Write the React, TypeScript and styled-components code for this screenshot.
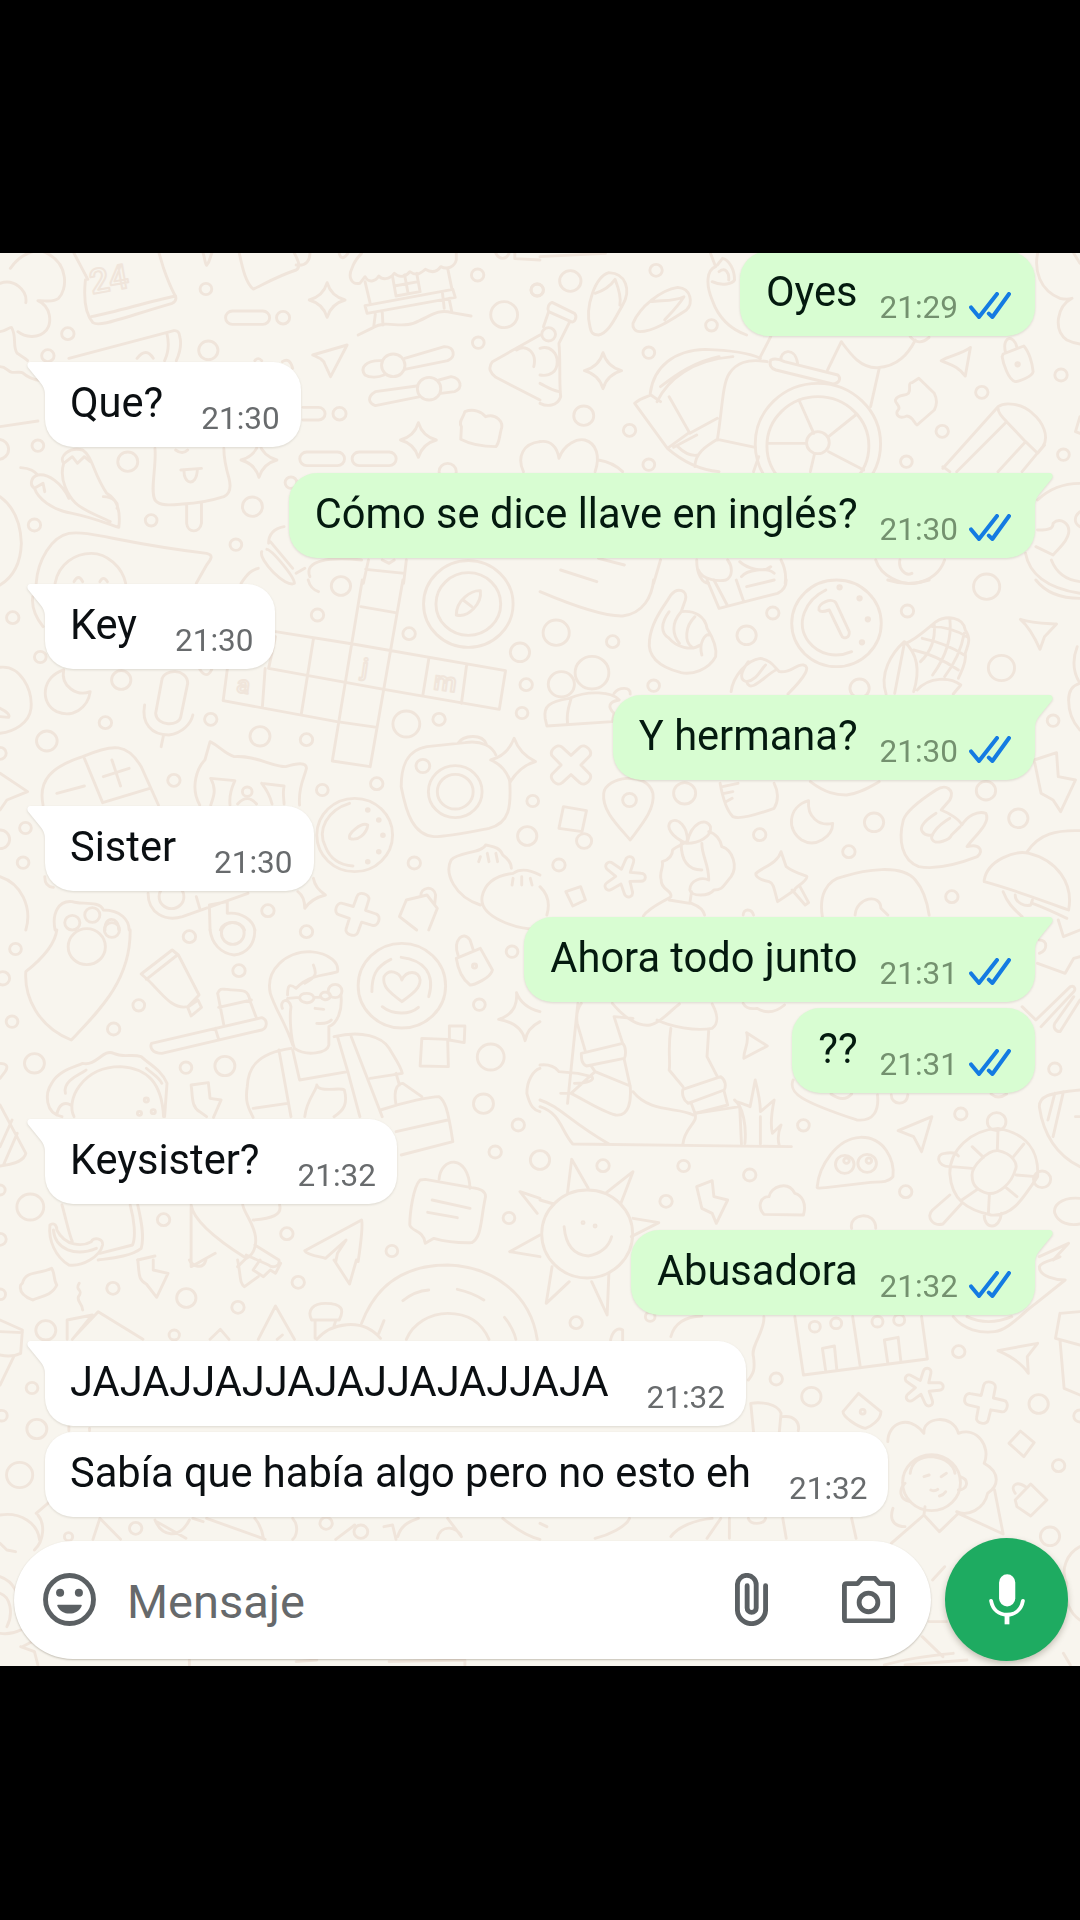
import React from "react";
import styled, { createGlobalStyle, css } from "styled-components";

const GlobalStyle = createGlobalStyle`
  *, *::before, *::after { box-sizing: border-box; }
  body { margin: 0; background: #000; }
`;

const Screen = styled.div`
  display: flex;
  flex-direction: column;
  width: 1080px;
  height: 1920px;
  padding: 253px 0 254px;
  background: #000;
  font-family: Roboto, "Noto Sans", sans-serif;
`;

const Chat = styled.main`
  display: grid;
  grid-template: minmax(0, 1fr) / minmax(0, 1fr);
  flex: 1;
  min-height: 0;
  overflow: hidden;
  background: #f8f5ee;
`;

const WallpaperSvg = styled.svg`
  grid-area: 1 / 1;
  width: 1080px;
  height: 1413px;
  fill: none;
  stroke: #f0e5db;
  stroke-width: 2.9px;
  stroke-linecap: round;
  stroke-linejoin: round;

  path,
  circle {
    vector-effect: non-scaling-stroke;
  }
`;

const WallpaperLetter = styled.text`
  stroke-width: 2px;
  font-weight: 500;
`;

const Column = styled.div`
  grid-area: 1 / 1;
  position: relative;
  display: flex;
  flex-direction: column;
  justify-content: flex-end;
  min-height: 0;
`;

const Messages = styled.div`
  display: flex;
  flex-direction: column;
  padding: 0 45px;
`;

const Bubble = styled.div<{ $mine: boolean; $tail: boolean; $grouped: boolean }>`
  position: relative;
  display: flex;
  align-items: flex-start;
  flex: none;
  height: 85px;
  margin-top: ${(p) => (p.$grouped ? 6 : 26)}px;
  border-radius: 28px;
  white-space: nowrap;
  filter: drop-shadow(0 1.5px 1px rgba(90, 80, 60, 0.17));
  ${(p) =>
    p.$mine
      ? css`
          align-self: flex-end;
          gap: 22px;
          padding: 16px 24px 10px 26px;
          background: #d8fdd2;
          ${p.$tail && "border-top-right-radius: 0;"}
        `
      : css`
          align-self: flex-start;
          gap: 38px;
          padding: 16px 21px 10px 25px;
          background: #fff;
          ${p.$tail && "border-top-left-radius: 0;"}
        `}
`;

const TailSvg = styled.svg<{ $mine: boolean }>`
  position: absolute;
  top: 0;
  width: 19px;
  height: 36px;
  ${(p) =>
    p.$mine
      ? "right: -18px; transform: scaleX(-1); fill: #d8fdd2;"
      : "left: -18px; fill: #fff;"}
`;

const Text = styled.span<{ $mine: boolean }>`
  font-size: 41.6px;
  line-height: 49px;
  color: ${(p) => (p.$mine ? "#041a0f" : "#0b0f12")};
`;

const Meta = styled.span<{ $mine: boolean }>`
  display: flex;
  align-items: flex-end;
  align-self: flex-end;
  gap: 11px;
  font-size: 31.5px;
  line-height: 37px;
  color: ${(p) => (p.$mine ? "#74916f" : "#686b6d")};
`;

const TicksSvg = styled.svg`
  width: 42px;
  height: 27px;
  margin-bottom: 7px;
  fill: none;
  stroke: #147be2;
  stroke-width: 4px;
  stroke-linecap: round;
  stroke-linejoin: round;
`;

const Composer = styled.footer`
  display: flex;
  align-items: center;
  flex: none;
  gap: 14px;
  margin-top: 21px;
  padding: 0 12px 5px 14px;
`;

const InputPill = styled.div`
  display: flex;
  align-items: center;
  flex: 1;
  height: 118px;
  padding: 0 36px 0 29px;
  border-radius: 59px;
  background: #fff;
  color: #5b6063;
  box-shadow: 0 1px 2px rgba(80, 70, 50, 0.3);
`;

const Placeholder = styled.span`
  flex: 1;
  margin-left: 31px;
  padding-top: 5px;
  font-size: 47px;
  line-height: 56px;
  color: #66696b;
`;

const Icon = styled.svg<{ $w: number; $h: number; $gap?: number }>`
  flex: none;
  width: ${(p) => p.$w}px;
  height: ${(p) => p.$h}px;
  margin-right: ${(p) => p.$gap ?? 0}px;
  fill: none;
  stroke: currentColor;
  stroke-width: 14.5px;
  stroke-linecap: round;
  stroke-linejoin: round;
`;

const MicArc = styled.path`
  stroke-width: 11.5px;
`;

const MicButton = styled.button`
  display: flex;
  align-items: center;
  justify-content: center;
  flex: none;
  width: 123px;
  height: 123px;
  padding: 0;
  border: 0;
  border-radius: 50%;
  background: #1eab61;
  color: #fff;
  box-shadow: 0 3px 6px rgba(60, 50, 30, 0.28);
`;

/* ---------- wallpaper ---------- */

type Tile = { x: number; y: number; dots: number[][]; art: string[] };

const star = (cx: number, cy: number, r: number) => {
  const k = r * 0.22;
  return `M${cx} ${cy - r}Q${cx + k} ${cy - k} ${cx + r} ${cy}Q${cx + k} ${cy + k} ${cx} ${cy + r}Q${cx - k} ${cy + k} ${cx - r} ${cy}Q${cx - k} ${cy - k} ${cx} ${cy - r}Z`;
};

/* Closed outline with rounded arms: four for a plus, five for an asterisk. */
const arms = (cx: number, cy: number, r: number, count: number, turn: number) => {
  const w = count === 4 ? 0.27 : 0.19;
  const inner = count === 4 ? 0.4 : 0.36;
  const parts: string[] = [];
  for (let i = 0; i < count; i++) {
    const a = ((turn + (360 / count) * i) * Math.PI) / 180;
    const n = a + Math.PI / count;
    const at = (along: number, across: number) =>
      `${(cx + Math.cos(a) * along * r - Math.sin(a) * across * r).toFixed(1)} ${(cy + Math.sin(a) * along * r + Math.cos(a) * across * r).toFixed(1)}`;
    parts.push(
      `${i ? "L" : "M"}${at(0.78, -w)}C${at(1.05, -w)} ${at(1.05, w)} ${at(0.78, w)}`
    );
    parts.push(`L${(cx + Math.cos(n) * inner * r).toFixed(1)} ${(cy + Math.sin(n) * inner * r).toFixed(1)}`);
  }
  return parts.join("") + "Z";
};

const tiles: Tile[] = [
  {
    x: 0,
    y: 240,
    dots: [
      [598, 147, 17], [822, 233, 19], [197, 281, 18], [139, 347, 18], [605, 331, 28], [1387, 105, 18],
      [1464, 224, 39], [1389, 308, 17], [986, 521, 19], [371, 665, 29], [110, 617, 17], [733, 800, 29],
      [439, 841, 17], [100, 855, 18], [685, 914, 17], [-5, 628, 30], [1142, 376, 34], [1246, 446, 34],
      [845, 728, 17], [1300, 695, 25], [1560, 150, 18],
    ],
    art: [
      "M30 85C60 40 110 20 140 42C200 75 195 150 170 175C150 190 130 180 110 182C150 200 150 250 135 270C110 300 70 290 52 275M0 130C40 115 80 150 75 188",
      "M0 275C15 275 25 262 33 262C50 290 35 320 50 340C65 350 75 355 80 362M0 380C20 380 20 395 35 397C50 398 60 395 65 398C80 412 100 420 120 422",
      "M215 40L255 118M248 120C242 180 250 225 270 248C290 262 350 235 500 190C515 182 512 170 505 160C490 130 480 100 475 85L462 40M265 230C340 215 430 185 510 168",
      "M675 213H763A20 20 0 0 1 763 253H675A20 20 0 0 1 675 213ZM891 636H980A20 20 0 0 1 980 677H891A20 20 0 0 1 891 636ZM1043 636H1130A20 20 0 0 1 1130 677H1043A20 20 0 0 1 1043 636ZM880 502H925A19 19 0 0 1 925 540H880",
      star(950, 180, 52), star(1215, 600, 52), star(752, 660, 52),
      "M1008 315L908 345C930 355 940 360 943 372L960 410Z",
      "M590 40C595 55 595 70 600 76C610 65 610 50 615 40M985 40C990 60 1000 55 1010 40M1440 40C1450 60 1470 60 1478 40M1495 40V56L1568 60",
      "M200 355L505 272Q520 270 522 290Q530 320 512 362M485 282Q495 325 478 362M398 355Q425 320 445 355M740 362Q750 350 760 362M820 365Q840 350 850 385",
      "M1108 362C1060 360 1045 385 1060 405C1075 415 1100 412 1115 405M1175 355L1290 320C1320 320 1325 350 1300 362L1175 388M1210 438L1090 455C1065 470 1070 490 1090 497L1220 470M1275 420L1310 410C1340 415 1345 445 1320 455L1280 460",
      "M1022 85C1010 110 1020 135 1045 130L1060 110C1070 130 1090 125 1100 108C1110 120 1130 120 1145 100C1160 115 1180 110 1190 95C1210 110 1220 100 1235 88C1255 100 1270 95 1280 80C1300 90 1320 80 1325 60V40M1022 85C1030 60 1040 50 1050 40",
      "M1060 125L1075 190M1060 197L1315 148L1322 172L1066 220ZM1090 222L1085 262M1110 215L1112 255M1285 160L1290 205M1300 85L1312 145M1304 175L1312 215M1040 285L1085 262C1120 240 1160 265 1200 250C1250 230 1270 205 1312 218L1368 228M1140 110L1150 168L1220 155L1210 100M1145 138L1215 125M1175 105L1185 160",
      "M695 40C705 90 715 130 735 147C745 145 800 110 860 90C875 80 865 60 855 40M860 75C890 80 900 60 900 40",
      "M1340 560C1330 545 1345 535 1350 515C1375 505 1400 515 1410 530C1440 520 1465 545 1455 570C1450 590 1450 610 1440 620C1400 620 1360 610 1338 598Z",
      "M450 625C455 680 435 750 450 780C465 800 500 795 530 792C570 790 620 780 650 770C670 760 670 735 665 715C655 680 650 650 650 625M542 795V850C545 880 580 880 585 850V790M525 690L585 685M535 690C530 730 570 745 573 690M510 630Q530 645 545 630",
      "M60 683C90 685 100 695 110 705C90 710 85 735 100 745C110 775 150 810 210 820C260 830 310 850 345 862C350 820 345 780 310 760C270 700 270 650 240 630C200 620 170 650 185 670M185 670C170 720 200 770 220 790C240 810 280 825 320 845M110 705C140 700 180 730 200 775M300 770C330 770 345 790 340 805M185 670L210 650L225 670L245 650L262 665M100 745L125 730L130 755",
      "M105 1030C110 960 150 890 200 880C260 870 350 910 600 940C620 945 615 955 600 975L570 1030M160 1030C170 970 220 940 265 940C310 940 355 980 365 1030M215 1025Q228 1000 240 1025M290 1025Q300 1005 312 1025",
      "M0 770C40 800 60 850 62 910C60 970 40 1010 0 1035M0 560L110 543",
      "M780 910C780 880 800 865 825 860M785 905L850 985M760 935C750 960 830 1045 855 1030C855 1010 790 930 775 928M700 1030C720 1000 730 990 750 985M860 1000L885 985",
      "M900 1010C880 960 960 950 1050 960M1070 960L1055 1030M1180 960L1172 1030M1062 988L1175 1000M1110 960L1130 970L1145 960",
      "M1568 285L1430 365C1415 385 1425 400 1440 412L1568 480M1500 330C1530 310 1560 340 1550 380M1568 605C1520 610 1500 650 1520 695",
    ],
  },
  {
    x: 540,
    y: 240,
    dots: [
      [88, 123, 31], [337, 91, 18], [498, 256, 17], [316, 338, 17], [127, 527, 29], [260, 571, 18],
      [316, 674, 17], [807, 608, 33], [807, 618, 148], [807, 612, 182], [1283, 457, 18], [1168, 574, 18],
      [1064, 665, 17], [1513, 405, 18], [1520, 644, 17], [25, 283, 20], [1387, 373, 5], [-8, 150, 18],
    ],
    art: [
      "M0 50L190 40",
      "M145 260C130 200 160 110 200 98C250 100 265 150 240 195C220 230 200 280 170 285C150 285 148 275 145 260ZM160 160C190 150 210 130 218 118C230 150 235 180 232 195",
      "M270 250C290 200 350 150 400 142C440 145 445 190 425 210C380 240 330 275 290 275C275 275 268 262 270 250ZM320 185C350 180 390 185 418 170C400 200 370 230 362 240",
      "M35 187L100 220C110 230 100 250 90 245L25 215C20 205 25 190 35 187ZM25 215L10 260M85 248L55 310C60 360 55 420 60 470C50 500 20 500 0 490M0 325C30 315 50 340 50 365C50 395 30 410 0 405M0 430C20 440 30 450 55 455",
      "M495 40L510 80C485 90 480 130 500 180C520 240 560 270 600 285M500 125C530 140 560 130 565 120C565 90 550 60 530 55L515 75M520 95C540 80 550 100 548 120",
      "M320 460C330 380 390 330 480 328C540 330 600 335 640 355M340 485C370 420 440 360 560 350M350 440C400 400 450 365 520 350M640 350L670 290M275 490C290 475 310 470 322 465L350 485M375 470L435 580L515 535M275 490L370 625L430 580M515 600C530 500 530 430 550 400C570 370 600 355 660 365M515 598L625 622M370 625C420 670 470 690 520 695M400 620C420 640 440 650 460 645M450 680C450 640 480 620 515 598M388 622L455 585M635 650L620 695",
      "M670 360C665 375 670 385 685 390L850 432C870 430 875 415 865 405L710 365C690 355 680 355 670 360ZM700 360C695 335 740 315 748 370M835 390L875 305C900 340 930 385 980 383C1040 380 1070 340 1090 300M985 385L960 500M1075 290Q1100 320 1130 292",
      "M752 480L795 580M838 590L920 522M838 635L940 690M770 610H662M797 642L785 695",
      star(183, 392, 54),
      "M0 605C30 600 50 620 55 655C70 610 110 595 130 600C165 610 175 650 160 695M170 660C200 665 220 675 240 695",
      "M1100 415L1145 460C1155 480 1150 500 1145 510L1095 555C1085 550 1085 530 1065 528C1040 540 1030 520 1040 510C1050 500 1030 490 1032 480C1040 460 1060 470 1070 460C1080 445 1065 430 1080 428Z",
      "M1250 322C1220 345 1190 345 1165 362C1190 375 1210 375 1235 408Z",
      "M1345 342L1405 318C1420 335 1430 370 1432 395C1430 410 1390 425 1380 425C1360 420 1345 370 1342 350ZM1352 338C1340 290 1375 280 1385 322",
      "M1170 685L1330 500C1350 485 1400 490 1430 520C1460 545 1480 590 1460 620L1400 695M1330 505C1330 520 1350 540 1355 545L1410 605L1445 640L1465 615M1355 545L1210 695M1410 605L1330 695M1170 680L1190 695",
      "M1445 40C1435 90 1450 150 1510 175C1530 180 1545 175 1545 175C1500 200 1490 270 1530 300C1550 310 1568 312 1568 312M1568 530L1555 575L1568 580M1550 40L1568 70",
      "M1445 780C1480 745 1520 730 1568 730M1445 870C1490 870 1490 860 1490 850C1510 830 1540 850 1535 880C1530 910 1500 930 1490 945L1440 920M1410 940C1420 1000 1470 1045 1568 1060M1485 960C1500 1000 1530 1020 1568 1025M1568 815C1550 830 1550 850 1568 860",
      "M455 960C455 1000 470 1030 490 1030M545 960C560 980 560 1010 540 1020C520 1025 470 1020 460 990M580 965C600 985 650 1000 670 980M700 960C715 990 715 1010 712 1030M585 1010C600 990 660 980 680 1000M350 960L330 1030M60 990L165 1025M170 955L245 975M975 960C990 1010 1050 1035 1090 1030C1140 1020 1165 990 1175 960M1045 960C1040 985 1060 1010 1080 1000",
    ],
  },
  {
    x: 0,
    y: 580,
    dots: [
      [37, 113, 18], [117, 231, 17], [352, 300, 28], [306, 428, 18], [136, 483, 30], [612, 418, 18],
      [755, 469, 29], [890, 479, 18], [505, 601, 18], [936, 630, 17], [1094, 611, 18], [1180, 432, 39],
      [1275, 418, 18], [1510, 217, 28], [1528, 314, 18], [1516, 399, 17], [1188, 161, 18], [922, 105, 18],
      [990, 18, 28], [1547, 663, 17], [1531, 768, 28], [1203, 849, 18], [778, 992, 18], [67, 848, 17],
      [74, 744, 17], [0, 778, 28], [1360, 72, 130], [1360, 72, 94], [1322, 635, 52], [1322, 635, 78],
      [1228, 558, 20], [1030, 765, 110], [0, 520, 18], [210, 1028, 22], [268, 1005, 22], [498, 950, 36],
      [718, 635, 14], [1068, 690, 4], [1100, 720, 4], [1112, 766, 4], [1100, 815, 4], [1068, 845, 4],
    ],
    art: [
      "M1325 105C1325 60 1370 30 1395 32C1400 70 1360 115 1325 105ZM1345 60L1370 80",
      "M800 155L1025 192L1468 272L1450 388L1115 328M780 265L1115 328M660 268L648 362L978 425L1095 442M1052 0L965 543L1075 560L1170 0M770 265L762 380M910 178L875 402M1245 238L1228 345M1355 255L1340 370M1048 80L1148 98M800 170L780 265",
      "M185 270C120 290 115 370 165 395C210 415 255 385 262 335C225 350 175 320 185 270Z",
      "M470 300C475 265 545 265 545 310L525 410C520 440 455 440 452 400ZM420 375C410 430 440 465 490 465C530 460 555 430 560 405M475 465L468 500M580 268Q600 300 615 268",
      "M125 675C110 600 150 560 240 530C330 490 370 490 410 560L460 675M245 535L298 668M165 640L245 618M298 668L435 625M300 590L375 565M325 540L350 618",
      "M580 675C550 620 575 560 595 540L610 485C640 500 650 520 680 530C740 525 790 560 830 560C860 550 890 545 890 565C885 590 865 620 870 675M612 675C620 650 630 630 612 595L682 602C672 625 665 650 668 675M760 610L825 618C820 640 825 660 825 672M760 610C775 630 785 650 790 672M690 672Q718 640 745 672",
      "M1440 525C1430 500 1400 480 1350 488L1240 500C1180 510 1165 560 1165 620C1180 700 1200 765 1260 770C1300 770 1370 755 1420 745C1480 730 1485 680 1480 600M1330 490C1345 465 1400 460 1412 492",
      "M1493 475C1505 510 1525 530 1555 545C1520 555 1500 575 1482 605C1470 570 1450 550 1425 540C1460 530 1480 510 1493 475Z",
      "M1015 670C950 690 920 750 945 800C960 840 990 855 1025 858M1015 775C1010 760 1050 725 1068 735C1065 760 1040 785 1015 775Z",
      "M0 262C60 255 95 330 90 385C85 430 40 455 0 460M0 385C20 395 30 405 25 412L0 410M0 580L80 635L20 660L0 690M0 890C60 910 95 980 75 1050",
      "M1395 975C1320 950 1290 880 1310 840C1330 815 1400 820 1410 795C1430 800 1450 800 1460 825C1480 840 1485 855 1485 865M1568 1048C1500 1050 1390 1010 1400 950C1410 900 1450 885 1490 880C1510 865 1540 870 1568 885M1395 830L1390 845M1415 820L1420 845M1440 820L1445 845M1490 895L1487 915M1515 890V915M1540 895L1545 915",
      "M1180 960L1240 945L1270 985L1245 1050M1180 960L1160 1010L1210 1050M1222 950C1220 920 1260 915 1265 945L1262 975",
      arms(1038, 1003, 66, 4, 18),
      "M160 1050C150 1000 170 960 210 965C230 975 290 960 300 990C350 990 375 1020 375 1050M305 1050C300 1010 345 1005 345 1050M430 940C430 1000 480 1025 530 1010L720 940M580 985L570 950M610 1050L608 975L660 965V1000C700 995 735 1020 740 1050M640 1050C650 1020 700 1020 710 1050",
      "M865 935Q885 950 885 985Q905 955 945 945Q915 925 910 895M95 50C90 90 110 120 125 140M130 890Q130 920 155 922M895 0C900 20 910 30 925 35",
    ],
  },
  {
    x: 540,
    y: 580,
    dots: [
      [47, 158, 38], [151, 278, 49], [62, 313, 38], [211, 185, 18], [600, 166, 28], [676, 99, 18],
      [330, 317, 17], [861, 130, 130], [1067, 93, 18], [1340, 264, 38], [1297, 20, 38], [928, 325, 28],
      [1490, 422, 17], [420, 640, 32], [260, 660, 20], [638, 764, 18], [970, 727, 28], [897, 815, 18],
      [1389, 715, 28], [1295, 632, 28], [1196, 950, 18], [55, 855, 18], [128, 783, 22], [870, 22, 5],
      [928, 55, 5], [952, 118, 5], [935, 187, 5],
    ],
    art: [
      "M0 35C80 70 180 110 240 108C300 100 325 50 330 0",
      "M318 180C325 120 360 80 380 45C400 20 430 30 422 60L410 95C450 90 480 110 485 145C500 170 515 200 510 230C490 270 440 285 410 278C360 265 310 240 318 180ZM375 95C350 130 350 160 375 175M410 95C380 130 385 165 405 190M450 110C420 140 420 185 440 200M470 225C460 190 480 160 490 165M375 175C395 200 440 215 465 195",
      "M485 0L520 85L690 40C710 30 715 15 715 0M505 0L545 78M570 0L590 60M600 20L680 0",
      "M830 30C770 60 740 130 780 185C810 225 860 235 905 215M810 90C805 70 850 50 860 70L898 155C900 175 880 180 875 165L840 90C825 95 815 98 810 90Z",
      "M1005 342C985 280 1020 220 1058 185C1095 220 1105 270 1085 335M1058 190L1030 340M1095 330C1130 290 1190 290 1222 315L1200 342M1062 190C1090 180 1120 150 1150 125C1180 105 1230 110 1235 150C1255 180 1240 200 1235 220C1240 250 1220 280 1215 295M1085 210Q1150 225 1215 270M1110 175Q1180 190 1232 225M1140 140Q1190 140 1240 170M1145 135Q1150 200 1105 245M1190 115Q1200 200 1140 285M1232 160Q1220 230 1175 290",
      "M1395 118C1430 130 1470 130 1500 132L1465 170L1452 208C1440 180 1420 140 1395 118Z",
      "M555 335C560 290 600 240 640 235C670 240 680 260 695 275C730 280 745 250 765 255C785 260 775 285 720 342M605 245C580 280 580 300 600 305C630 300 640 270 655 255M600 305C610 345 660 280 685 270",
      "M15 415C10 380 25 365 85 355C140 330 210 335 230 360C200 365 195 380 215 400L210 425L20 438ZM80 430C75 390 90 365 90 355M215 340C230 320 265 320 262 342",
      arms(90, 555, 72, 4, 45),
      arms(243, 890, 64, 5, -70),
      "M68 680L135 692L122 755L55 745ZM75 935L118 920L132 960L95 978Z",
      "M262 780C220 730 180 690 185 640C190 590 310 570 328 640C335 690 290 740 262 780Z",
      "M523 610C530 650 540 690 560 710C580 720 640 700 680 685C695 660 690 630 680 610M530 620L575 610M535 640L560 635M540 665L558 655M785 605C830 640 860 645 890 645C930 640 960 620 985 605",
      "M780 662C720 680 715 750 760 780C800 805 850 770 850 730C810 740 775 710 780 662Z",
      "M1055 720C1065 690 1120 650 1150 630C1180 610 1205 630 1190 660L1165 690C1190 700 1220 720 1225 735C1240 710 1270 690 1295 700C1310 730 1260 770 1240 800C1275 790 1290 810 1270 830C1220 850 1150 870 1100 860C1050 840 1040 780 1055 720ZM1150 700C1120 720 1100 740 1110 755C1120 770 1140 765 1140 765M1190 715C1150 740 1130 770 1140 780C1150 795 1190 780 1195 765L1220 740",
      "M1435 540L1500 518L1505 590L1555 600L1512 695L1490 660L1455 640Z",
      "M1535 360C1535 400 1550 430 1568 450M1560 200C1545 240 1550 280 1568 310M1535 360C1535 330 1550 315 1568 310M1440 0C1470 40 1520 55 1568 55M1010 0Q1070 20 1130 0",
      "M1290 900C1300 840 1380 810 1420 820C1500 840 1550 910 1535 990C1480 970 1380 930 1290 905ZM1415 815C1450 760 1500 750 1568 752M1345 935C1360 975 1380 990 1400 1010M1380 945C1380 970 1410 980 1425 975L1430 960M1430 970C1470 985 1510 1005 1530 1015",
      "M300 1008C320 980 360 965 380 950C385 930 350 930 352 900C345 880 360 860 355 845C370 840 385 830 385 810C395 800 420 790 425 785M425 790C380 770 365 740 380 725C400 710 430 740 428 785C440 730 480 710 495 740C500 770 460 790 428 790M490 755C510 760 525 780 528 800C560 810 575 860 555 890C530 920 530 930 505 930C490 950 440 950 435 930C435 900 470 890 490 900M410 790C410 830 420 870 470 870M470 790C470 830 490 850 490 900M375 960L435 970L440 935M440 970C465 980 475 990 478 1005",
      "M700 815L715 860C740 880 770 885 775 890C775 905 735 925 740 930L690 965C680 930 680 910 665 905C640 900 625 890 627 880C650 860 690 850 700 815ZM732 930L770 975L780 968L755 920",
      "M820 1010C810 950 830 900 880 890C940 870 1050 850 1090 900C1115 930 1125 970 1130 1005M915 1005C920 950 990 940 990 985L1010 1005M0 920C20 940 30 970 20 1005M590 1005C590 985 615 985 620 1005",
    ],
  },
  {
    x: 0,
    y: 920,
    dots: [
      [45, 87, 17], [252, 80, 54], [325, 30, 22], [676, 40, 33], [550, 50, 18], [694, 152, 18],
      [890, 35, 18], [403, 256, 17], [35, 305, 17], [330, 327, 18], [100, 430, 29], [540, 443, 17],
      [653, 438, 29], [1167, 197, 127], [1487, 95, 17], [1392, 254, 17], [1425, 411, 39], [1404, 551, 29],
      [1505, 615, 18], [1438, 696, 18], [1478, 894, 17], [88, 861, 39], [475, 899, 18], [833, 941, 18],
      [1138, 993, 17], [8, 175, 20], [0, 810, 15], [0, 958, 18], [1378, 138, 6], [425, 540, 6],
      [445, 575, 6], [405, 580, 6], [973, 213, 20],
    ],
    art: [
      "M165 30C160 70 130 110 75 155C70 230 110 320 207 360C290 270 380 180 378 30",
      "M410 162L500 90L518 105L578 225L545 260C500 270 470 220 430 180ZM425 178L515 105M545 262L575 240L585 262L555 288Z",
      "M610 30C615 70 640 100 680 105C720 100 740 70 740 30",
      "M440 370L760 293C780 300 775 325 760 330L470 400C440 400 435 380 440 370ZM625 325L635 358M632 220C640 200 650 210 660 208C690 215 720 200 725 240L745 295M635 262L730 240M632 220L650 315",
      "M785 220C770 150 830 95 900 95C960 100 985 130 980 155C960 165 900 160 860 205C840 190 835 195 835 225M910 135C920 160 920 170 885 190M785 220C800 270 830 310 850 375M820 265C810 240 840 230 845 260C840 290 845 360 855 385C890 410 950 400 955 375V320C980 310 995 270 990 225M920 310C940 312 955 308 962 300M870 235C870 215 910 215 912 235C905 255 875 250 870 235ZM930 228C935 210 960 215 960 230C950 245 935 240 930 228ZM912 232H930M835 235L870 232M915 265L940 268",
      "M845 385C740 400 720 450 718 500C710 550 725 570 735 592M810 390L845 590M850 390L870 480L1010 455L980 350M970 350C1050 330 1110 350 1130 385C1150 420 1165 440 1168 460L1075 475M1020 350L1110 590M735 565L835 550M1010 455L1045 590M885 590C890 540 920 510 920 495C925 520 990 500 1000 510C1010 550 1000 570 970 590",
      "M1105 570C1180 545 1250 530 1275 530C1290 540 1300 560 1315 665L1165 705M1150 635L1300 600M1150 555C1140 500 1160 490 1170 490L1225 530M1150 460L1160 495",
      "M1167 245C1130 215 1110 200 1115 170C1130 145 1160 155 1167 180C1180 150 1215 150 1220 180C1220 205 1200 220 1167 245ZM1080 215C1080 170 1090 140 1135 118M1165 112C1230 120 1265 160 1245 230M1110 260C1140 285 1190 285 1215 262",
      "M1325 115L1395 85L1430 150C1425 175 1375 195 1365 195C1345 180 1330 150 1325 115ZM1330 105C1315 60 1345 30 1365 60L1375 92",
      "M1500 218Q1515 260 1568 275M1500 218Q1505 280 1448 298Q1515 310 1525 362Q1530 325 1568 305",
      "M1225 355L1300 358L1302 440L1220 438ZM1305 318H1350L1348 368L1305 360Z",
      "M180 590C130 580 130 520 150 490C170 450 220 440 240 430C280 440 300 385 330 400C360 415 380 400 410 410C430 430 470 450 485 490L478 590M215 590C190 540 240 440 350 440C430 445 470 490 475 590M165 585C170 550 190 545 205 555M190 520C180 480 240 460 250 450M425 445C440 460 460 470 470 490",
      "M555 495L605 488L610 535L642 540L620 592M555 495C560 530 555 560 580 575L600 590",
      "M0 430C20 430 25 440 15 455L0 475M0 555L75 700C70 725 30 735 0 738M0 680L35 600M10 735L50 640",
      "M180 855C190 890 200 940 210 965M378 855C390 900 395 950 385 975L290 1000M400 855C410 900 420 950 410 985C380 1010 320 1015 285 1020M145 915C160 905 165 920 165 930C190 980 240 980 265 965C270 950 300 955 298 975C290 1010 240 1040 200 1035C160 1010 140 960 145 915ZM155 930C160 990 220 1010 280 985",
      "M555 855C560 890 600 940 715 1015C745 1000 745 960 740 940C730 900 710 880 705 855M555 860V1040L625 1000M715 1015L690 1040M740 975L810 1020C815 1040 790 1045 780 1035L715 1005M735 900C790 895 820 885 812 855",
      "M885 992L1050 900C1055 920 1045 990 1040 1025M885 992C890 1005 930 1010 945 1015L1005 960L980 1000L975 1025",
      "M1220 780C1200 800 1190 880 1190 915C1195 935 1230 930 1235 970L1260 955C1310 970 1350 968 1370 968C1400 950 1395 900 1410 830C1410 810 1390 805 1370 803L1235 778ZM1275 778C1280 710 1360 700 1365 805M1255 840L1365 865M1242 877L1328 893",
      "M1530 520C1530 480 1550 450 1568 445M1530 520C1540 560 1550 570 1568 575M1510 815L1568 835M1510 815L1560 880M1480 995L1568 945M1480 995L1568 1010M400 1020L450 1008",
    ],
  },
  {
    x: 540,
    y: 920,
    dots: [
      [765, 616, 17], [1222, 582, 18], [885, 733, 27], [950, 730, 27], [183, 737, 18], [417, 738, 17],
      [609, 765, 18], [366, 844, 18], [1062, 815, 18], [1495, 447, 18], [1326, 605, 27], [1458, 778, 25],
      [0, 720, 28], [160, 918, 3], [125, 908, 3], [137, 942, 132], [890, 722, 8], [955, 722, 8],
    ],
    art: [
      "M110 250L80 550M120 250C105 270 105 290 108 310L132 395M120 400L240 370C250 380 250 405 245 415L135 438C120 430 120 415 120 400ZM240 370L215 290L270 295M210 250C250 300 290 320 320 315C350 310 380 270 405 252M340 300C380 320 450 335 500 325C520 310 515 280 500 252M380 325C370 390 380 430 375 450L415 500M490 330L485 410L515 470M415 508L525 470C540 480 540 500 535 510L430 550C415 540 412 520 415 508ZM440 552L450 580L545 555L535 515",
      "M150 440L160 455L90 520C130 540 180 575 220 585C260 590 265 540 262 500L245 420M160 455L262 498M445 585C400 560 320 580 270 515M585 672L580 560L450 580C460 610 420 620 415 672M0 435C40 430 50 450 55 455L110 460L150 470C160 480 140 490 100 490M60 520H85M0 540C60 560 80 600 200 672M0 560C60 580 60 630 95 672L730 680M565 540C590 560 600 620 595 670M570 545C600 555 610 560 610 560L625 480C635 520 640 560 640 575L680 540C670 590 670 620 675 640L700 615C690 640 690 660 695 678M640 590V672",
      "M600 338L660 378L592 415C590 390 610 370 600 338Z",
      "M735 480C720 520 760 545 920 600C970 605 985 570 980 525M1020 525C1020 555 1065 560 1068 525M845 522C870 540 890 540 905 522M1310 522Q1330 540 1355 522M590 250Q600 270 630 265Q670 290 710 255",
      "M1138 590L1040 632L1085 650L1108 695Z",
      "M805 800C810 740 860 655 930 652C1000 650 1030 720 1025 770C1010 790 980 785 960 787L830 803C810 805 803 805 805 800Z",
      "M1190 760C1190 690 1250 630 1330 625C1410 640 1450 690 1445 770C1400 840 1370 890 1310 885C1240 870 1195 840 1190 760ZM1255 770C1250 740 1300 690 1330 692C1370 700 1390 730 1380 750C1370 790 1330 825 1300 820C1265 810 1255 790 1255 770ZM1330 628L1328 690M1255 680L1288 712M1195 740L1255 745M1225 840L1270 808M1305 822L1302 882M1350 800L1385 830M1383 765L1440 770M1375 710L1405 672M1190 740C1150 740 1150 700 1175 700C1200 695 1210 700 1215 708M1190 825L1140 870C1120 890 1140 920 1170 912L1225 850M1290 885C1290 930 1335 930 1340 880",
      "M455 800L500 782L505 830L545 840L512 910L500 880L470 865Z",
      "M650 883C630 860 640 830 665 830C670 800 720 780 740 820C760 825 775 850 765 885Z",
      "M70 920C75 980 100 1005 140 1008C180 1000 200 980 208 950M80 818L92 718L140 805M190 820L270 755L235 850M270 895L345 908L265 950M0 840L40 852",
      "M905 925C895 880 975 870 975 925M1568 835C1510 830 1490 860 1495 880C1505 910 1540 918 1568 912M1568 510C1470 520 1450 530 1450 560C1460 630 1490 700 1568 740M1495 520L1475 600M1520 515L1490 650M1555 590H1568",
      "M1505 0L1520 50L1568 30M1445 130L1525 160L1550 115L1568 110M1450 100C1475 90 1475 60 1450 60M1400 260L1440 300L1540 200C1555 195 1555 210 1550 215L1455 320M1568 240L1510 335C1495 335 1490 320 1495 310L1550 230M1450 1010L1535 970L1490 1020",
    ],
  },
  {
    x: 0,
    y: 1260,
    dots: [
      [328, 85, 18], [541, 114, 28], [691, 142, 18], [866, 67, 18], [133, 211, 29], [506, 225, 15],
      [93, 384, 17], [107, 507, 29], [57, 645, 38], [394, 805, 18], [947, 790, 18], [1048, 815, 20],
      [0, 103, 16], [5, 467, 16], [199, 830, 12],
    ],
    art: [
      "M65 70C75 30 110 45 150 25C160 40 155 60 165 75C150 110 110 110 95 120C70 110 55 95 60 75ZM230 70C215 95 245 85 228 110C222 125 240 130 240 150",
      "M400 0C405 40 400 60 425 72L455 112L488 40L445 30V0M690 0C700 50 695 70 710 80L750 50M755 0L735 30L765 50L785 30L800 40L815 10M550 0C560 20 590 30 598 0M970 0L1015 72L1035 0",
      "M750 238L800 138L855 238M610 238L640 208L665 238M195 238V180L268 165L210 238M215 232L285 155L415 238M805 238L820 225",
      "M905 180C890 150 910 130 945 130C995 130 1000 150 985 180ZM915 182V235M975 182L970 198M920 238C960 190 1050 170 1105 235M1050 190C1090 80 1170 15 1300 15C1430 20 1540 100 1560 238M1180 238C1200 190 1250 160 1300 160C1360 160 1400 190 1420 238M1170 122C1190 105 1220 92 1245 90M1328 88C1360 95 1390 110 1405 120M1465 172C1480 190 1495 220 1498 238M1115 182L1100 220",
      "M0 180L65 210L60 280C40 290 20 290 0 285M0 215L65 218M40 290L0 375",
      "M0 765C60 755 110 790 115 840M105 760L145 725M110 765C130 790 130 840 100 870M0 1000C30 1010 40 1060 20 1100M0 850L20 870L45 875M60 1160L100 1175L110 1215M65 1160L120 1130M0 950Q30 960 45 990M200 500V512M260 505V512M0 1120Q30 1125 60 1110",
      "M270 838L290 775L350 838M450 780C470 830 520 840 550 780M455 785L540 835M560 775L590 785M600 775L770 838M850 775C870 800 860 830 850 838M740 775Q760 800 765 835M1115 800L1140 795L1150 838M1155 830C1165 790 1200 780 1215 775M1270 835C1280 790 1330 800 1340 830L1300 775M1460 775C1490 800 1530 830 1568 838M975 838L1030 795",
      "M550 1200V1215M860 1205L920 1200M1130 1205L1350 1200V1215",
    ],
  },
  {
    x: 540,
    y: 1260,
    dots: [
      [105, 188, 18], [686, 357, 18], [788, 410, 28], [1216, 275, 18], [1448, 432, 28], [1506, 617, 18],
      [1481, 829, 28], [937, 455, 7], [1137, 668, 84], [1568, 468, 18], [798, 200, 16], [860, 190, 16],
      [980, 185, 16], [1043, 180, 16], [320, 170, 14],
    ],
    art: [
      "M35 20L18 130L85 65M150 65L195 165L200 40",
      "M740 170L765 345L1125 297L1108 170M908 170L930 320M830 335L820 265L855 258L862 330M1010 310L1000 240L1040 232L1048 305",
      "M380 230C390 190 420 170 470 168M650 170C655 210 610 260 620 290C625 330 620 340 605 360M205 240C210 215 225 200 240 210V240M1200 170C1230 210 1280 220 1320 215C1360 210 1400 160 1440 130L1525 60C1500 60 1450 50 1450 20C1460 0 1500 0 1510 -10M1240 170Q1300 200 1370 170",
      arms(1112, 382, 60, 5, -75),
      arms(1295, 428, 64, 4, 12),
      "M1330 272L1445 250L1415 290L1418 340C1400 310 1370 290 1330 272Z",
      "M880 455L925 400L990 455C990 480 960 500 945 505C920 500 880 470 880 455ZM1395 513L1435 548L1405 590L1362 550ZM1380 720L1425 672L1472 720L1425 768L1385 740ZM1380 700C1365 680 1380 660 1410 680",
      "M1510 160L1568 155M1510 160L1497 235L1568 255M1510 240L1522 385L1568 405",
      "M612 430C640 425 690 430 700 460L695 515M612 430L620 515M705 470C740 465 755 490 750 512",
      "M1010 545C1010 490 1070 460 1115 520C1110 470 1200 460 1215 520C1270 500 1310 560 1290 610C1340 640 1330 680 1300 700C1290 750 1240 770 1210 755M1075 640C1080 600 1110 590 1140 590C1170 595 1200 610 1205 640M1060 670C1040 690 1045 720 1075 725M1220 650C1250 660 1240 690 1215 690M1118 740L1115 765L1160 815L1215 760M1115 765L1020 850M1025 745C1010 790 1040 800 1060 800M1215 760L1345 822L1320 690M1115 650L1130 645M1165 650L1180 640M1135 690C1145 695 1150 692 1155 688M1160 708C1170 705 1175 700 1178 695",
      "M160 835C200 825 250 800 260 775M380 830C400 800 450 780 500 775M485 835L525 775M550 775V835M705 775L715 835M905 775L918 835M605 775C610 795 650 795 655 775M0 790L20 800",
      "M1140 960L1175 920M1130 1085H1180M1110 1130L1170 1190M1568 860C1530 880 1510 930 1530 970C1520 1020 1540 1060 1568 1080M1200 1180C1100 1190 1050 1200 1000 1215M1240 1200L1060 1215M1540 1215L1520 1180",
    ],
  },
];

const letters = [
  { x: 92, y: 294, size: 34, turn: -10, text: "24" },
  { x: 236, y: 692, size: 24, turn: 8, text: "a" },
  { x: 361, y: 675, size: 24, turn: 8, text: "j" },
  { x: 433, y: 689, size: 26, turn: 8, text: "m" },
];

function Wallpaper() {
  return (
    <WallpaperSvg viewBox="0 253 1080 1413" aria-hidden="true">
      {tiles.map((tile, i) => (
        <g key={i} transform={`translate(${tile.x} ${tile.y}) scale(0.34436 0.33333)`}>
          {tile.art.map((d, n) => (
            <path key={n} d={d} />
          ))}
          {tile.dots.map(([cx, cy, r], n) => (
            <circle key={n} cx={cx} cy={cy} r={r} />
          ))}
        </g>
      ))}
      {letters.map((l) => (
        <WallpaperLetter
          key={l.text}
          transform={`translate(${l.x} ${l.y}) rotate(${l.turn})`}
          fontSize={l.size}
        >
          {l.text}
        </WallpaperLetter>
      ))}
    </WallpaperSvg>
  );
}

/* ---------- messages ---------- */

type Message = { text: string; time: string; mine?: boolean; tail?: boolean; grouped?: boolean };

const messages: Message[] = [
  { text: "Oyes", time: "21:29", mine: true },
  { text: "Que?", time: "21:30", tail: true },
  { text: "Cómo se dice llave en inglés?", time: "21:30", mine: true, tail: true },
  { text: "Key", time: "21:30", tail: true },
  { text: "Y hermana?", time: "21:30", mine: true, tail: true },
  { text: "Sister", time: "21:30", tail: true },
  { text: "Ahora todo junto", time: "21:31", mine: true, tail: true },
  { text: "??", time: "21:31", mine: true, grouped: true },
  { text: "Keysister?", time: "21:32", tail: true },
  { text: "Abusadora", time: "21:32", mine: true, tail: true },
  { text: "JAJAJJAJJAJAJJAJAJJAJA", time: "21:32", tail: true },
  { text: "Sabía que había algo pero no esto eh", time: "21:32", grouped: true },
];

function MessageBubble({ text, time, mine = false, tail = false, grouped = false }: Message) {
  return (
    <Bubble $mine={mine} $tail={tail} $grouped={grouped}>
      {tail && (
        <TailSvg $mine={mine} viewBox="0 0 20 36" preserveAspectRatio="none">
          <path d="M20 0H3.5C0.5 0 -0.6 3.4 1.4 5.8L14 20.5C17.5 24.6 19 28 19 34V36H20Z" />
        </TailSvg>
      )}
      <Text $mine={mine}>{text}</Text>
      <Meta $mine={mine}>
        {time}
        {mine && (
          <TicksSvg viewBox="0 0 42 27">
            <path d="M2.1 15.4L10 25L28 2M19.8 21.6L23.4 25L40 2" />
          </TicksSvg>
        )}
      </Meta>
    </Bubble>
  );
}

export default function App() {
  return (
    <>
      <GlobalStyle />
      <Screen>
        <Chat>
          <Wallpaper />
          <Column>
            <Messages>
              {messages.map((m, i) => (
                <MessageBubble key={i} {...m} />
              ))}
            </Messages>
            <Composer>
              <InputPill>
                <Icon $w={53} $h={53} viewBox="0 0 158 158">
                  <circle cx="79" cy="79" r="71.5" />
                  <g fill="currentColor" stroke="none">
                    <circle cx="51" cy="59" r="12" />
                    <circle cx="107" cy="59" r="12" />
                    <path d="M45 95H113Q117 95 115 99C108 113 95 121 79 121S50 113 43 99Q41 95 45 95Z" />
                  </g>
                </Icon>
                <Placeholder>Mensaje</Placeholder>
                <Icon $w={33} $h={53} $gap={74} viewBox="0 0 98 158">
                  <path d="M91 38V109A42 42 0 0 1 7 109V35A28 28 0 0 1 63 35V104A13.5 13.5 0 0 1 36 104V38" />
                </Icon>
                <Icon $w={53} $h={47.5} viewBox="0 0 158 142">
                  <path d="M14 23H46L60 7H98L112 23H144Q151 23 151 30V128Q151 134 145 134H13Q7 134 7 128V30Q7 23 14 23Z" />
                  <circle cx="79" cy="79" r="28" />
                </Icon>
              </InputPill>
              <MicButton aria-label="Mensaje de voz">
                <Icon $w={36} $h={51} viewBox="0 0 108 154">
                  <rect x="30" y="1" width="49" height="97" rx="24.5" fill="currentColor" stroke="none" />
                  <MicArc d="M6 81C11 108 30 123 54 123S97 108 102 81" />
                  <path d="M54 124V152" strokeLinecap="butt" />
                </Icon>
              </MicButton>
            </Composer>
          </Column>
        </Chat>
      </Screen>
    </>
  );
}
